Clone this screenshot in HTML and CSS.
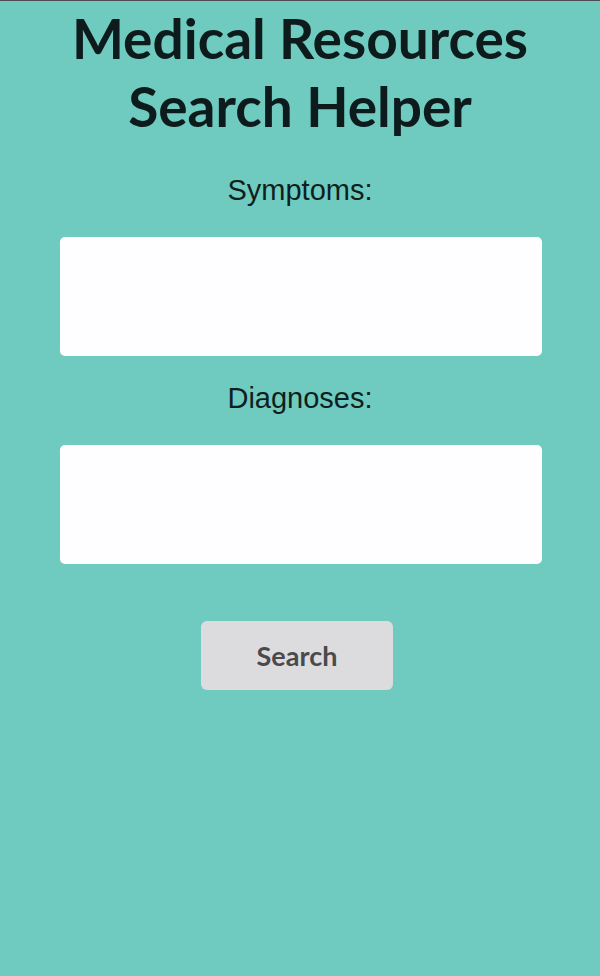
FILE: index.html
```html
<!DOCTYPE html>
<html lang="en">
<head>
<meta charset="utf-8">
<title>Medical Resources Search Helper</title>
<link rel="stylesheet" href="styles.css">
</head>
<body>
<main class="page">
  <h1 class="title">Medical Resources<br>Search Helper</h1>
  <form class="search-form">
    <label class="field-label" for="symptoms">Symptoms:</label>
    <textarea class="field-box" id="symptoms"></textarea>
    <label class="field-label field-label--next" for="diagnoses">Diagnoses:</label>
    <textarea class="field-box" id="diagnoses"></textarea>
    <button class="search-btn" type="button">Search</button>
  </form>
</main>
</body>
</html>
```

FILE: styles.css
```css
html, body {
  margin: 0;
  padding: 0;
  height: 100%;
}

body {
  background: #6fcbbf;
  border-top: 1px solid #4b4d52;
  box-sizing: border-box;
}

.page {
  display: flex;
  flex-direction: column;
  align-items: center;
  padding-top: 3px;
}

.title {
  margin: 0;
  font-family: Lato, "Liberation Sans", sans-serif;
  font-weight: 700;
  font-size: 55px;
  line-height: 68px;
  color: #0e1b1c;
  text-align: center;
}

.search-form {
  display: flex;
  flex-direction: column;
  align-items: center;
  margin-top: 34px;
}

.field-label {
  font-family: "Liberation Sans", Arial, sans-serif;
  font-size: 29px;
  line-height: 32px;
  color: #0f1f20;
  margin-bottom: 31px;
}

.field-label--next {
  margin-top: 26px;
}

.field-box {
  display: block;
  width: 482px;
  height: 119px;
  box-sizing: border-box;
  margin: 0 0 0 2px;
  border: none;
  border-radius: 5px;
  background: #fefdff;
  resize: none;
  outline: none;
}

.search-btn {
  margin: 57px 6px 0 0;
  width: 192px;
  height: 69px;
  border: none;
  border-radius: 6px;
  background: #dcdcde;
  color: #4a4a4d;
  font-family: Lato, "Liberation Sans", sans-serif;
  font-weight: 700;
  font-size: 27px;
  cursor: pointer;
}
```
